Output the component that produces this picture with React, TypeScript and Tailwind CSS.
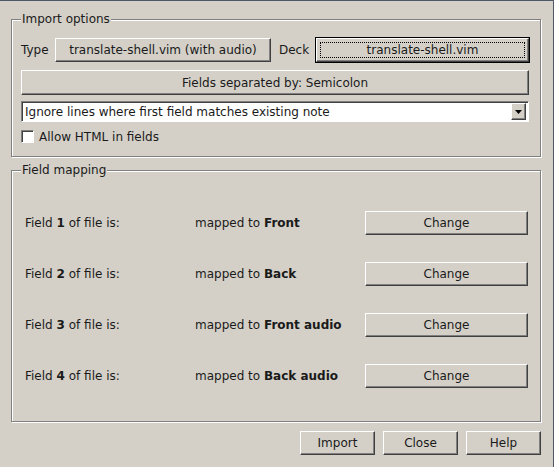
import React from 'react'

const rows = [
  { n: '1', target: 'Front' },
  { n: '2', target: 'Back' },
  { n: '3', target: 'Front audio' },
  { n: '4', target: 'Back audio' },
]

function Button({ children, className = '' }: { children: React.ReactNode; className?: string }) {
  return (
    <button
      className={`flex items-center justify-center bg-[#d4d0c8] border-t border-l border-t-white border-l-white border-b border-r border-b-[#404040] border-r-[#404040] shadow-[inset_-1px_-1px_0_#808080] text-[#1a1a1a] ${className}`}
    >
      {children}
    </button>
  )
}

function GroupBox({ title, className = '', children }: { title: string; className?: string; children: React.ReactNode }) {
  return (
    <fieldset
      className={`border border-[#808080] shadow-[1px_1px_0_#fff,inset_1px_1px_0_#fff] ml-[11px] w-[530px] pl-[9px] pr-[9px] ${className}`}
    >
      <legend className="px-[1px] bg-[#d4d0c8] leading-[15px]">{title}</legend>
      {children}
    </fieldset>
  )
}

export default function App() {
  return (
    <div
      className="w-[554px] h-[467px] bg-[#d4d0c8] border-t border-t-[#4f5866] border-r border-r-[#4f5866] text-[12px] text-[#1a1a1a] flex flex-col pt-[11px]"
      style={{ fontFamily: '"DejaVu Sans", sans-serif' }}
    >
      {/* Import options */}
      <GroupBox title="Import options" className="h-[145px] pt-[10px]">
        <div className="flex items-center h-[26px]">
          <span className="w-[34px]">Type</span>
          <Button className="w-[216px] h-[24px]">translate-shell.vim (with audio)</Button>
          <span className="ml-[8px] w-[36px]">Deck</span>
          <div className="w-[215px] h-[26px] border border-black">
            <Button className="w-full h-full">
              <span className="w-[205px] h-[16px] border border-dotted border-black flex items-center justify-center">
                translate-shell.vim
              </span>
            </Button>
          </div>
        </div>
        <Button className="w-[508px] h-[25px] mt-[7px]">Fields separated by: Semicolon</Button>
        <div className="mt-[6px] w-[508px] h-[21px] bg-white border-t border-l border-t-[#808080] border-l-[#808080] border-b border-r border-b-white border-r-white shadow-[inset_1px_1px_0_#404040] flex items-center pl-[3px] pr-[2px]">
          <span className="flex-1 leading-none">Ignore lines where first field matches existing note</span>
          <Button className="w-[15px] h-[17px]">
            <svg width="7" height="4" viewBox="0 0 7 4">
              <path d="M0 0h7L3.5 4z" fill="#000" />
            </svg>
          </Button>
        </div>
        <label className="mt-[7px] flex items-center gap-[5px] h-[15px]">
          <span className="w-[13px] h-[13px] bg-white border-t border-l border-t-[#808080] border-l-[#808080] border-b border-r border-b-white border-r-white shadow-[inset_1px_1px_0_#404040]" />
          <span>Allow HTML in fields</span>
        </label>
      </GroupBox>

      {/* Field mapping */}
      <GroupBox title="Field mapping" className="mt-[6px] h-[259px] pt-[33px]">
        <div className="flex flex-col gap-[27px] pl-[4px]">
          {rows.map((r) => (
            <div key={r.n} className="flex items-center h-[24px]">
              <span className="w-[170px]">
                Field <b>{r.n}</b> of file is:
              </span>
              <span className="w-[170px]">
                mapped to <b>{r.target}</b>
              </span>
              <Button className="w-[163px] h-[24px]">Change</Button>
            </div>
          ))}
        </div>
      </GroupBox>

      {/* Buttons */}
      <div className="flex justify-end gap-[8px] mt-[9px] pr-[12px]">
        <Button className="w-[75px] h-[24px]">Import</Button>
        <Button className="w-[75px] h-[24px]">Close</Button>
        <Button className="w-[75px] h-[24px]">Help</Button>
      </div>
    </div>
  )
}
